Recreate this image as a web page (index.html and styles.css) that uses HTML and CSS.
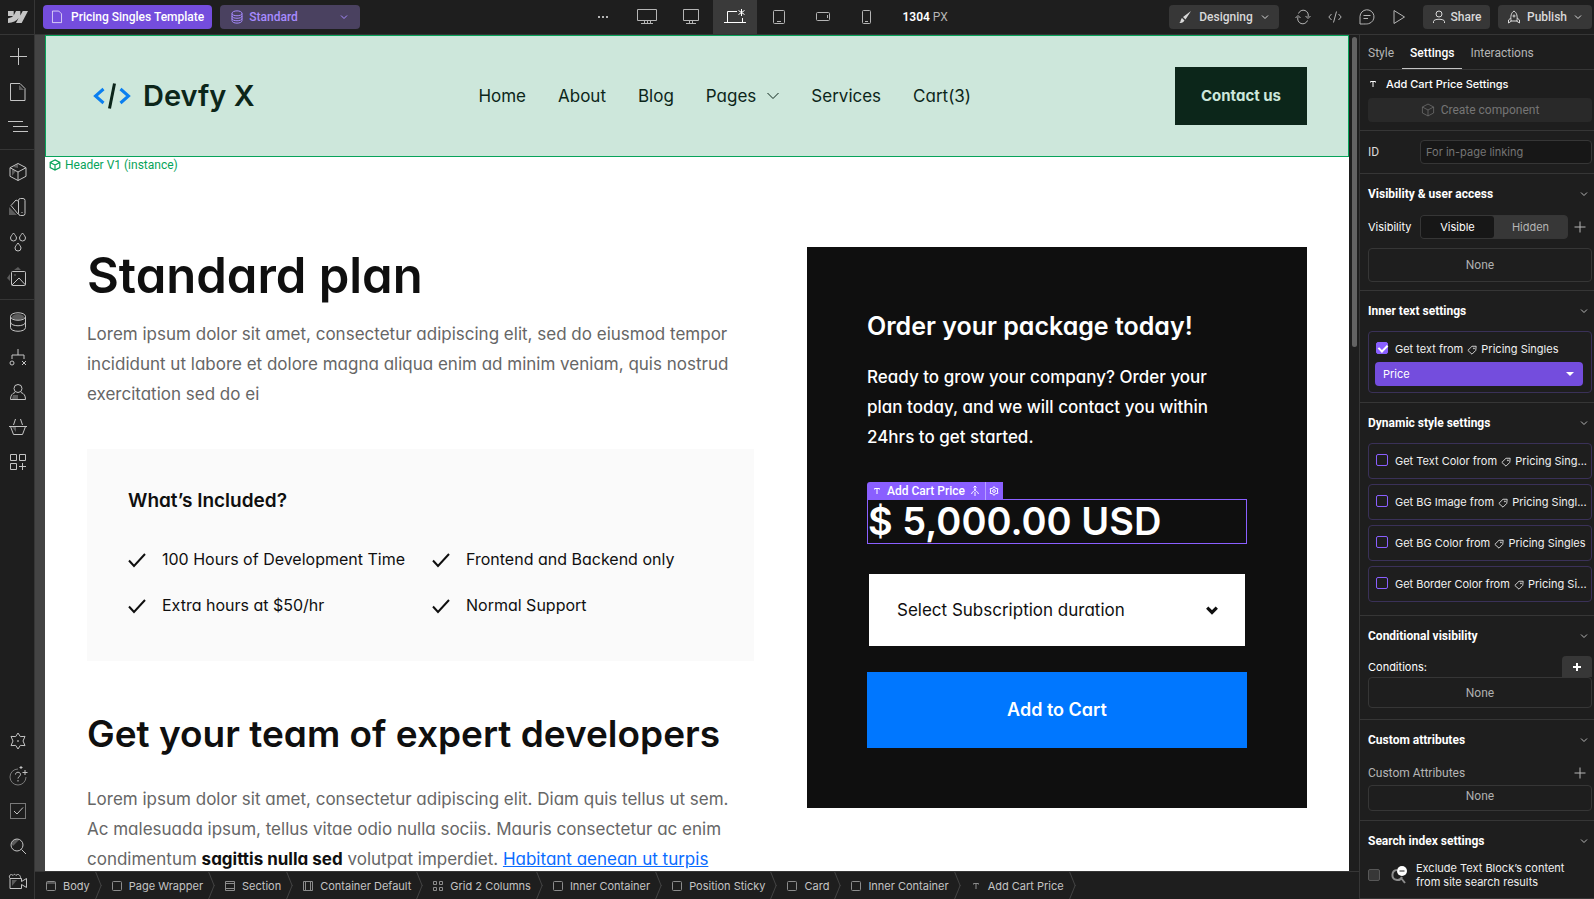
FILE: index.html
```html
<!DOCTYPE html>
<html lang="en">
<head>
    <meta charset="utf-8">
    <title>Pricing Singles Template</title>
    <link rel="stylesheet" href="styles.css">
</head>
<body>
    <!-- Shared icons -->
    <svg class="defs" aria-hidden="true">
        <symbol id="chevron" viewBox="0 0 10 10"><path d="M2 3.5l3 3 3-3"/></symbol>
        <symbol id="cube" viewBox="0 0 20 20"><path d="M10 1.5l8 4.2v8.6l-8 4.2-8-4.2V5.7zM2 5.7l8 4.3 8-4.3M10 10v8.5"/></symbol>
        <symbol id="tag" viewBox="0 0 12 12"><path d="M6 1.500h5l-.5 5L6 11 1 6.500z"/><circle cx="8.300" cy="4" r="0.600"/></symbol>
        <symbol id="plus" viewBox="0 0 12 12"><path d="M6 0.5v11M0.5 6h11"/></symbol>
        <symbol id="check" viewBox="0 0 18 18"><path d="M1 10.5l5 5.5L17 4"/></symbol>
        <symbol id="box" viewBox="0 0 10 10"><rect x="0.5" y="0.5" width="9" height="9" rx="1"/></symbol>
        <symbol id="letter" viewBox="0 0 10 10"><path d="M2.5 3.5v-1h5v1M5 2.5v5.5"/></symbol>
        <symbol id="page" viewBox="0 0 16 20"><path d="M1.5 1.5h9l4 4v12.5h-13z"/></symbol>
    </svg>

    <div class="app">
        <aside class="sidebar">
            <button class="logo" aria-label="Home">
                <svg width="20" height="12" viewBox="0 0 20 12"><path class="solid" d="M20 0l-6.300 12H8l2.600-5C8.500 9.900 5.100 11.700 0 12V7.300s3.200-.2 5-2.200H0V0h5.700v4.600L8 0h4.300v4.500L14.700 0z"/></svg>
            </button>
            <div class="tools">
                <button aria-label="Add"><svg width="17" height="17" viewBox="0 0 17 17"><path d="M8.500 0v17M0 8.500h17"/></svg></button>
                <button aria-label="Pages"><svg width="18" height="20" viewBox="0 0 18 20"><path class="shade" d="M10 3v5h5z"/><path d="M1.500 1.500h9.500l5 5v12h-14.500z"/></svg></button>
                <button aria-label="Navigator"><svg width="20" height="12" viewBox="0 0 20 12"><path d="M0 .5h15M5 5.500h15M5 10.500h15"/></svg></button>
            </div>
            <div class="tools">
                <button aria-label="Components"><svg width="20" height="20" viewBox="0 0 20 20"><path class="shade" d="M4 7l4 2-4 5zM5 5l5-3v4z"/><use href="#cube"/></svg></button>
                <button aria-label="Variables"><svg width="20" height="20" viewBox="0 0 20 20"><path class="shade" d="M1 10l8 8H1z"/><rect x="10.500" y="1.500" width="6.500" height="17" rx="2"/><path d="M10 4L8 3 3 8.500 10 17M14 15v1"/></svg></button>
                <button aria-label="Styles"><svg width="18" height="20" viewBox="0 0 18 20"><path d="M4.500 1C3 3 1.500 4.600 1.500 6a3 3 0 006 0c0-1.400-1.500-3-3-5zM13.500 1c-1.500 2-3 3.600-3 5a3 3 0 006 0c0-1.400-1.500-3-3-5zM9 11c-1.500 2-3 3.600-3 5a3 3 0 006 0c0-1.400-1.500-3-3-5z"/></svg></button>
                <button aria-label="Assets"><svg width="20" height="20" viewBox="0 0 20 20"><path class="shade" d="M6 3l4-3 3 3zM2 7v7l-3-3z"/><rect x="3.500" y="4.500" width="14" height="14" rx="1"/><path d="M4 18l7-7 6.500 7M7 7.500v1"/></svg></button>
            </div>
            <div class="tools last">
                <button aria-label="CMS"><svg width="18" height="22" viewBox="0 0 18 22"><ellipse class="shade" cx="9" cy="6" rx="6" ry="3"/><path d="M1.500 5.500c0-5 15-5 15 0v11c0 5-15 5-15 0zc0 5 15 5 15 0M1.500 11c0 5 15 5 15 0"/></svg></button>
                <button aria-label="Logic"><svg width="18" height="18" viewBox="0 0 18 18"><path d="M9 1v6M3 11V7h12v4M13 13l4 4M17 13l-4 4"/><circle cx="3" cy="15" r="2"/></svg></button>
                <button aria-label="Users"><svg width="18" height="18" viewBox="0 0 18 18"><path class="shade" d="M4 12h5v4H3z"/><circle cx="9" cy="5.500" r="4"/><path d="M6 9.500c-3 1-4.500 3-4.500 7h15c0-4-1.500-6-4.500-7"/></svg></button>
                <button aria-label="Ecommerce"><svg width="20" height="18" viewBox="0 0 20 18"><path class="shade" d="M4 9h4v5z"/><path d="M1 8.500h18M2.500 8.500l3 8h9l3-8M5.500 7l2-6M14.500 7l-2-6"/></svg></button>
                <button aria-label="Apps"><svg width="18" height="18" viewBox="0 0 18 18"><path d="M1.500 1.500h6v6h-6zM10.500 1.500h6v6h-6zM1.500 10.500h6v6h-6zM13.500 10v7M10 13.500h7"/></svg></button>
            </div>
            <div class="tools bottom">
                <button aria-label="Settings"><svg width="18" height="18" viewBox="0 0 18 18"><path stroke-linejoin="round" d="M9 1l2.300 3.600 4.700-.2L14 9l2 4.600-4.700-.2L9 17l-2.300-3.600-4.700.2L4 9 2 4.400l4.700.2z"/><circle cx="9" cy="9" r="0.500"/></svg></button>
                <button aria-label="Help"><svg width="20" height="20" viewBox="0 0 20 20"><path class="dim" d="M10 3a8 8 0 108 8"/><path d="M7.500 8.500c0-3 5-3 5 0 0 2-2.500 2-2.500 4M10 14v1.500M17 4v5M14.500 6.500h5M13 0v3M11.500 1.500h3"/></svg></button>
                <button aria-label="Audit"><svg width="18" height="18" viewBox="0 0 18 18"><rect class="dim" x="1.500" y="1.500" width="15" height="15"/><path d="M5 9l3 3 6-6.500"/></svg></button>
                <button aria-label="Search"><svg width="18" height="18" viewBox="0 0 18 18"><path class="shade" d="M4 9l6-6-4-1-4 4z"/><circle cx="8" cy="8" r="6"/><path d="M12.500 12.500L17 17"/></svg></button>
                <button aria-label="Videos"><svg width="20" height="18" viewBox="0 0 20 18"><path class="shade" d="M4 8h5l-5 6z"/><path d="M2 6.500h11.500v3l5-3v9l-5-3v4H2zM2 6.500C0 4 3 1 5 3.500c1-1.500 2-1.500 3 0 2-2.500 5 0 4.500 3"/></svg></button>
            </div>
        </aside>

        <header class="topbar">
            <button class="btn purple"><svg width="12" height="14" viewBox="0 0 16 20"><use href="#page"/></svg>Pricing Singles Template</button>
            <button class="btn collection"><svg width="12" height="14" viewBox="0 0 12 14"><path d="M1 3.500c0-3.500 10-3.500 10 0v7c0 3.500-10 3.500-10 0zc0 3 10 3 10 0M1 6c0 3 10 3 10 0M1 8.500c0 3 10 3 10 0"/></svg><span>Standard</span><svg width="10" height="10"><use href="#chevron"/></svg></button>
            <div class="devices">
                <button aria-label="More"><svg width="12" height="4" viewBox="0 0 12 4"><path class="solid" d="M1 1h2v2H1zM5 1h2v2H5zM9 1h2v2H9z"/></svg></button>
                <button aria-label="1920"><svg width="20" height="16" viewBox="0 0 20 16"><path d="M.5.500h19v11H.5zM4 14.500h12M7.500 12v2M10.500 12v2M13.500 12v2"/></svg></button>
                <button aria-label="1440"><svg width="16" height="16" viewBox="0 0 16 16"><path d="M.5.500h15v11H.5zM3 14.500h10M6.500 12v2M9.500 12v2"/></svg></button>
                <button class="active" aria-label="Desktop"><svg width="22" height="16" viewBox="0 0 22 16"><path d="M13 2.500H3.500v11M18.500 9v4.500M0 13.500h22M17.500 0v7M14.500 1.500l6 4M14.500 5.500l6-4"/></svg></button>
                <button aria-label="Tablet"><svg width="12" height="14" viewBox="0 0 12 14"><rect x="0.500" y="0.500" width="11" height="13" rx="1"/><path d="M4 11.500h4"/></svg></button>
                <button aria-label="Mobile landscape"><svg width="14" height="10" viewBox="0 0 14 10"><rect x="0.500" y="0.500" width="13" height="8" rx="1"/><path d="M11.500 3v3"/></svg></button>
                <button aria-label="Mobile portrait"><svg width="10" height="14" viewBox="0 0 10 14"><rect x="0.500" y="0.500" width="8" height="13" rx="1"/><path d="M3 11.500h3"/></svg></button>
                <div class="width"><b>1304</b> PX</div>
            </div>
            <button class="btn mode"><svg width="14" height="14" viewBox="0 0 14 14"><path class="solid" d="M1 13c2 0 1-3 3-5l2.500 2.500C5 13 3 13 1 13zM5 7l8-6-5.500 8.500z"/></svg>Designing<svg width="10" height="10"><use href="#chevron"/></svg></button>
            <div class="actions">
                <button aria-label="Sync"><svg width="16" height="14" viewBox="0 0 16 14"><path d="M3.500 3.500A5 5 0 0113 7M.5 8L3 5.500 5.500 8M12.500 10.500A5 5 0 013 7M10.500 6L13 8.500 15.500 6"/></svg></button>
                <button aria-label="Code"><svg width="14" height="12" viewBox="0 0 14 12"><path d="M3.500 3L.8 6l2.700 3M10.500 3l2.700 3-2.700 3M8.500.5l-3 11"/></svg></button>
                <button aria-label="Comments"><svg width="16" height="16" viewBox="0 0 16 16"><path d="M1 15V7.500A7 7 0 1110 14.500c-1 .5-3 .5-9 .5zM4.500 6.500h7M4.500 9.500H9"/></svg></button>
                <button aria-label="Preview"><svg width="12" height="16" viewBox="0 0 12 16"><path d="M1 1.500v13L11.500 8z"/></svg></button>
            </div>
            <button class="btn share"><svg width="14" height="14" viewBox="0 0 14 14"><circle cx="7" cy="4" r="3"/><path d="M1.500 13V11.500c0-3 11-3 11 0V13"/></svg>Share</button>
            <button class="btn publish"><svg width="14" height="14" viewBox="0 0 14 14"><path d="M7 1c-3 2-3.500 5-3 10h6C10.500 6 10 3 7 1zM3.800 8L1.500 10v3l3-2M10.200 8l2.300 2v3l-3-2"/><circle cx="7" cy="6" r="1"/></svg>Publish<svg width="10" height="10"><use href="#chevron"/></svg></button>
        </header>

        <main class="stage">
            <div class="canvas">
                <div class="site-header">
                    <a class="brand" href="#">
                        <svg width="38" height="26" viewBox="0 0 38 26"><path class="blue" d="M10.500 6L2.500 13l8 7M27.500 6l8 7-8 7"/><path class="slash" d="M21.500 0.500l-5 25"/></svg>
                        Devfy X
                    </a>
                    <nav>
                        <a href="#">Home</a>
                        <a href="#">About</a>
                        <a href="#">Blog</a>
                        <a href="#">Pages<svg width="12" height="8" viewBox="0 0 12 8"><path d="M.5 1L6 6.500 11.500 1"/></svg></a>
                        <a href="#">Services</a>
                        <a href="#">Cart(3)</a>
                    </nav>
                    <a class="contact" href="#">Contact us</a>
                    <div class="instance"><svg width="12" height="12" viewBox="0 0 20 20"><use href="#cube"/></svg>Header V1 (instance)</div>
                </div>

                <div class="content">
                    <article>
                        <h1>Standard plan</h1>
                        <p>Lorem ipsum dolor sit amet, consectetur adipiscing elit, sed do eiusmod tempor incididunt ut labore et dolore magna aliqua enim ad minim veniam, quis nostrud exercitation sed do ei</p>
                        <section class="included">
                            <h3>What’s Included?</h3>
                            <ul>
                                <li><svg width="18" height="18"><use href="#check"/></svg>100 Hours of Development Time</li>
                                <li><svg width="18" height="18"><use href="#check"/></svg>Frontend and Backend only</li>
                                <li><svg width="18" height="18"><use href="#check"/></svg>Extra hours at $50/hr</li>
                                <li><svg width="18" height="18"><use href="#check"/></svg>Normal Support</li>
                            </ul>
                        </section>
                        <h2>Get your team of expert developers</h2>
                        <p>Lorem ipsum dolor sit amet, consectetur adipiscing elit. Diam quis tellus ut sem. Ac malesuada ipsum, tellus vitae odio nulla sociis. Mauris consectetur ac enim condimentum <strong>sagittis nulla sed</strong> volutpat imperdiet. <a href="#">Habitant aenean ut turpis</a></p>
                    </article>

                    <section class="order">
                        <h2>Order your package today!</h2>
                        <p>Ready to grow your company? Order your plan today, and we will contact you within 24hrs to get started.</p>
                        <div class="price">
                            $ 5,000.00 USD
                            <div class="badge">
                                <svg width="10" height="10"><use href="#letter"/></svg>
                                <span>Add Cart Price</span>
                                <svg width="10" height="10" viewBox="0 0 10 10"><path d="M5 0v3M3.500 1.500L5 0l1.500 1.500M5 3C5 6 2 5 1.500 8M5 3c0 3 3 2 3.500 5M5 6v4"/></svg>
                                <button aria-label="Element settings"><svg width="10" height="10" viewBox="0 0 18 18"><path stroke-width="1.800" d="M9 1l2.500 3 4.500 1-1 4 1 4-4.500 1L9 17l-2.500-3L2 13l1-4-1-4 4.500-1z"/><circle stroke-width="1.800" cx="9" cy="9" r="2.500"/></svg></button>
                            </div>
                        </div>
                        <div class="duration">
                            <select aria-label="Subscription duration"><option>Select Subscription duration</option></select>
                            <svg width="16" height="16"><use href="#chevron"/></svg>
                        </div>
                        <button class="add-to-cart">Add to Cart</button>
                    </section>
                </div>
            </div>
            <div class="scrollbar"><div class="thumb"></div></div>
        </main>

        <aside class="panel">
            <div class="tabs">
                <button>Style</button>
                <button class="active">Settings</button>
                <button>Interactions</button>
            </div>
            <div class="element">
                <div class="element-name"><svg width="10" height="10"><use href="#letter"/></svg>Add Cart Price Settings</div>
                <button class="create" disabled><svg width="14" height="14" viewBox="0 0 20 20"><use href="#cube"/></svg>Create component</button>
            </div>
            <div class="row id-row">
                <label for="element-id">ID</label>
                <input type="text" id="element-id" placeholder="For in-page linking">
            </div>

            <section class="access">
                <h4>Visibility &amp; user access<svg width="10" height="10"><use href="#chevron"/></svg></h4>
                <div class="row">
                    <span class="name">Visibility</span>
                    <div class="toggle"><button class="active">Visible</button><button>Hidden</button></div>
                    <button class="plus" aria-label="Add condition"><svg width="12" height="12"><use href="#plus"/></svg></button>
                </div>
                <div class="none">None</div>
            </section>

            <section>
                <h4>Inner text settings<svg width="10" height="10"><use href="#chevron"/></svg></h4>
                <div class="binding bound">
                    <label><input type="checkbox" checked><span>Get text from <svg width="10" height="10"><use href="#tag"/></svg> Pricing Singles</span></label>
                    <div class="field">
                        <select aria-label="Field"><option>Price</option></select>
                        <svg width="8" height="4" viewBox="0 0 8 4"><path d="M0 0h8L4 4z"/></svg>
                    </div>
                </div>
            </section>

            <section class="dynamic">
                <h4>Dynamic style settings<svg width="10" height="10"><use href="#chevron"/></svg></h4>
                <div class="binding"><label><input type="checkbox"><span>Get Text Color from <svg width="10" height="10"><use href="#tag"/></svg> Pricing Sing...</span></label></div>
                <div class="binding"><label><input type="checkbox"><span>Get BG Image from <svg width="10" height="10"><use href="#tag"/></svg> Pricing Singl...</span></label></div>
                <div class="binding"><label><input type="checkbox"><span>Get BG Color from <svg width="10" height="10"><use href="#tag"/></svg> Pricing Singles</span></label></div>
                <div class="binding"><label><input type="checkbox"><span>Get Border Color from <svg width="10" height="10"><use href="#tag"/></svg> Pricing Si...</span></label></div>
            </section>

            <section class="conditional">
                <h4>Conditional visibility<svg width="10" height="10"><use href="#chevron"/></svg></h4>
                <div class="row between">
                    <span class="name">Conditions:</span>
                    <button class="add-condition" aria-label="Add condition"><svg width="8" height="8" viewBox="0 0 8 8"><path d="M4 0v8M0 4h8"/></svg></button>
                </div>
                <div class="none">None</div>
            </section>

            <section>
                <h4>Custom attributes<svg width="10" height="10"><use href="#chevron"/></svg></h4>
                <div class="row between attributes">
                    <span>Custom Attributes</span>
                    <button class="plus" aria-label="Add attribute"><svg width="12" height="12"><use href="#plus"/></svg></button>
                </div>
                <div class="none short">None</div>
            </section>

            <section>
                <h4>Search index settings<svg width="10" height="10"><use href="#chevron"/></svg></h4>
                <label class="exclude">
                    <input type="checkbox">
                    <svg width="18" height="18" viewBox="0 0 18 18"><path d="M7 4a5 5 0 105 7M11 12l4 5"/><circle cx="12" cy="5" r="5"/><path class="minus" d="M9.500 5h5"/></svg>
                    <span>Exclude Text Block’s content<br>from site search results</span>
                </label>
            </section>
        </aside>

        <footer class="breadcrumbs">
            <button><svg width="10" height="10" viewBox="0 0 10 10"><rect x="0.500" y="0.500" width="9" height="9" rx="1"/><path d="M.5 2h9"/></svg>Body</button>
            <button><svg width="10" height="10"><use href="#box"/></svg>Page Wrapper</button>
            <button><svg width="10" height="10" viewBox="0 0 10 10"><path d="M.5.500h9v9H.5zM.5 2.500h9M.5 7.500h9"/></svg>Section</button>
            <button><svg width="10" height="10" viewBox="0 0 10 10"><path d="M.5.500h9v9H.5zM2.500.5v9M7.500.5v9"/></svg>Container Default</button>
            <button><svg width="10" height="10" viewBox="0 0 10 10"><path d="M.5.500h3v3h-3zM6.500.500h3v3h-3zM.5 6.500h3v3h-3zM6.500 6.500h3v3h-3z"/></svg>Grid 2 Columns</button>
            <button><svg width="10" height="10"><use href="#box"/></svg>Inner Container</button>
            <button><svg width="10" height="10"><use href="#box"/></svg>Position Sticky</button>
            <button><svg width="10" height="10"><use href="#box"/></svg>Card</button>
            <button><svg width="10" height="10"><use href="#box"/></svg>Inner Container</button>
            <button><svg width="10" height="10"><use href="#letter"/></svg>Add Cart Price</button>
        </footer>
    </div>
</body>
</html>
```
FILE: styles.css
```css
* { box-sizing: border-box; }
body { margin: 0; background: #1e1e1e; color: #d9d9d9; font: 12px/16px Roboto, "Liberation Sans", sans-serif; }
button, input, select { font: inherit; color: inherit; background: none; border: none; margin: 0; padding: 0; }
button { display: flex; align-items: center; justify-content: center; cursor: pointer; }
h1, h2, h3, h4, p, ul { margin: 0; padding: 0; }
a { color: inherit; text-decoration: none; }
svg { fill: none; stroke: currentColor; flex: none; overflow: visible; }
.solid { fill: currentColor; stroke: none; }
.shade { fill: #5c5c5c; stroke: none; }
.dim { stroke: #7a7a7a; }
.defs { position: absolute; width: 0; height: 0; }

.app { display: grid; grid-template-columns: 35px minmax(0, 1fr) 235px; grid-template-rows: 35px minmax(0, 1fr) 28px; height: 100vh; }

/* Left sidebar */
.sidebar { grid-row: 1 / 4; display: flex; flex-direction: column; border-right: 1px solid #363636; color: #c4c4c4; }
.logo { height: 35px; padding-left: 2px; border-bottom: 1px solid #363636; }
.tools { padding: 4px 0 5px 2px; border-bottom: 1px solid #363636; }
.tools button { width: 100%; height: 35px; }
.tools.last { border: none; }
.tools.bottom { margin-top: auto; padding-top: 0; padding-bottom: 1px; border: none; }

/* Top bar */
.topbar { grid-column: 2 / 4; display: flex; align-items: center; padding: 0 2px 1px 8px; border-bottom: 1px solid #363636; }
.btn { height: 24px; gap: 5px; padding: 0 8px; border-radius: 4px; background: #373737; font-weight: 500; white-space: nowrap; }
.purple { min-width: 169px; background: #744ddd; color: #fff; gap: 8px; }
.collection { width: 140px; margin-left: 8px; padding: 0 11px; gap: 6px; background: #4a4160; color: #a78bff; }
.collection span { flex: 1; text-align: left; }
.devices { display: flex; align-items: center; margin: 0 auto; color: #b5b5b5; }
.devices button { width: 44px; height: 34px; }
.devices .active { background: #3a3a3a; color: #fff; }
.width { padding-left: 13px; }
.width b { color: #fff; font-weight: 600; }
.mode { width: 110px; gap: 7px; }
.actions { display: flex; margin: 0 8px; color: #b5b5b5; }
.actions button { width: 32px; height: 24px; }
.share { min-width: 67px; margin-right: 8px; }
.publish { min-width: 94px; gap: 6px; padding: 0 7px; }

/* Canvas */
.stage { display: flex; min-height: 0; padding-left: 10px; background: #444; }
.canvas { flex: 1; overflow: hidden; background: #fff; color: #0f0f0f; font-family: Inter, "Liberation Sans", sans-serif; font-size: 17px; line-height: 30px; font-feature-settings: "cv11"; }
.scrollbar { width: 10px; padding: 2px 3px 0 3px; background: #1e1e1e; }
.thumb { width: 5px; height: 310px; border-radius: 3px; background: #636363; }

.site-header { position: relative; display: flex; align-items: center; justify-content: space-between; height: 122px; padding: 0 41px; border: 1px solid #07a35a; background: #cde7db; color: #0c261a; }
.brand { display: flex; align-items: center; gap: 12px; padding: 0 20px 0 6px; font-size: 29px; font-weight: 600; }
.blue { stroke: #0a7ff0; stroke-width: 3; }
.slash { stroke-width: 3; }
nav { display: flex; gap: 32px; }
nav svg { margin-left: 11px; vertical-align: 2px; }
.contact { padding: 14px 26px; background: #0c261a; color: #cde7db; font-size: 15px; font-weight: 700; }
.instance { position: absolute; top: 121px; left: 3px; display: flex; align-items: center; gap: 4px; color: #07a35a; font-family: Roboto, sans-serif; font-size: 12px; line-height: 16px; }
.instance svg { stroke-width: 2; }

.content { display: grid; grid-template-columns: minmax(0, 1fr) 500px; gap: 53px; align-items: start; padding: 90px 42px 0; }
article h1 { margin-bottom: 14px; font-size: 49px; line-height: 58px; font-weight: 600; }
article p { color: #666; }
article strong { color: #0f0f0f; }
article p a { color: #0a6cff; text-decoration: underline; }
.included { margin: 40px 0 48px; padding: 37px 41px 41px; background: #fafafa; }
.included h3 { font-size: 19px; font-weight: 600; }
.included ul { display: grid; grid-template-columns: 272px 1fr; gap: 16px 32px; margin-top: 28px; list-style: none; font-size: 16px; }
.included li { display: flex; align-items: center; gap: 16px; white-space: nowrap; }
.included svg { stroke-width: 2; }
article h2 { margin-bottom: 25px; font-size: 37px; line-height: 50px; font-weight: 600; }

.order { padding: 60px; background: #0f0f0f; color: #fff; }
.order h2 { margin-bottom: 17px; font-size: 25px; line-height: 38px; font-weight: 600; }
.order p { padding-right: 24px; font-weight: 500; }
.price { position: relative; margin: 47px 0 28px; border: 1px solid #8a5fff; font-size: 38px; line-height: 43px; font-weight: 600; }
.badge { position: absolute; bottom: 100%; left: -1px; display: flex; align-items: center; gap: 5px; height: 18px; padding-left: 5px; border-radius: 3px 0 0 0; background: #8a5fff; font-family: Roboto, sans-serif; font-size: 12px; line-height: 16px; font-weight: 500; }
.badge button { width: 18px; height: 18px; border-left: 1px solid #b79fff; }
.duration { position: relative; padding: 2px; }
.duration select { width: 100%; height: 72px; padding: 0 28px; appearance: none; background: #fff; color: #0f0f0f; }
.duration svg { position: absolute; right: 27px; top: 30px; stroke: #0f0f0f; stroke-width: 2; }
.add-to-cart { width: 100%; height: 76px; margin-top: 24px; background: #07f; font-size: 18px; font-weight: 600; }

/* Settings panel */
.panel { grid-row: 2 / 4; grid-column: 3; min-height: 0; overflow: hidden; border-left: 1px solid #363636; }
.tabs { display: flex; height: 35px; border-bottom: 1px solid #363636; color: #b5b5b5; }
.tabs button { padding: 1px 8px 0; }
.tabs .active { padding-top: 2px; border-bottom: 1px solid #c4c4c4; color: #fff; font-weight: 500; }
.element { padding: 6px 2px 8px 8px; border-bottom: 1px solid #363636; }
.element-name, .id-row input, .name, .toggle, .binding, .exclude, .breadcrumbs { font-family: Inter, "Liberation Sans", sans-serif; font-size: 11px; }
.element-name { display: flex; align-items: center; gap: 8px; color: #fff; font-weight: 500; }
.create { width: 100%; height: 24px; margin-top: 6px; gap: 6px; border-radius: 4px; background: #292929; color: #757575; }
.row { display: flex; align-items: center; }
.id-row { height: 43px; padding: 0 2px 0 8px; border-bottom: 1px solid #363636; }
.id-row label { width: 52px; }
.id-row input { flex: 1; min-width: 0; height: 24px; padding: 0 5px; border: 1px solid #363636; border-radius: 4px; background: #171717; }
.id-row input::placeholder { color: #757575; }
.panel section { padding: 0 2px 9px 8px; border-bottom: 1px solid #363636; }
h4 { display: flex; align-items: center; justify-content: space-between; height: 40px; padding-right: 3px; color: #fff; font-size: 12px; font-weight: 700; }
h4 svg { color: #b5b5b5; }
.name { width: 52px; color: #fff; }
.toggle { display: flex; flex: 1; height: 24px; border: 1px solid #363636; border-radius: 4px; background: #373737; color: #b5b5b5; }
.toggle button { flex: 1; border-radius: 3px; }
.toggle .active { background: #171717; color: #fff; }
.plus { width: 24px; height: 24px; color: #b5b5b5; }
.none { display: flex; align-items: center; justify-content: center; height: 31px; border: 1px solid #363636; border-radius: 4px; color: #b0b0b0; }
.access .row { margin: 1px 0 9px; }
.access .none { height: 34px; }
.panel .access { padding-bottom: 8px; }
.short { height: 26px; padding-bottom: 4px; }
.binding { height: 36px; padding: 0 4px 0 7px; border: 1px solid #3a3158; border-radius: 4px; }
.binding + .binding { margin-top: 5px; }
.binding label { display: flex; align-items: center; gap: 7px; height: 34px; color: #f0f0f0; }
.binding span { white-space: nowrap; }
.binding span svg { margin: 0 1px; vertical-align: -2px; }
.binding input { flex: none; width: 12px; height: 12px; margin-bottom: 2px; appearance: none; border: 1px solid #8a5fff; border-radius: 2px; }
.binding input:checked { background: #8a5fff; }
.binding input:checked::before { content: ""; display: block; width: 4px; height: 7px; margin: 0 3px; border: solid #fff; border-width: 0 2px 2px 0; transform: rotate(45deg); }
.bound { height: 62px; padding: 3px 8px 0 6px; }
.bound label { height: 27px; padding-left: 1px; }
.field { position: relative; }
.field select { width: 100%; height: 24px; padding: 0 8px; appearance: none; border-radius: 4px; background: #744ddd; color: #fff; }
.field svg { position: absolute; right: 9px; top: 10px; fill: #fff; stroke: none; }
.panel .dynamic { padding-bottom: 13px; }
.panel .conditional { padding-bottom: 11px; }
.between { justify-content: space-between; }
.add-condition { width: 30px; height: 21px; border-radius: 4px 4px 0 0; background: #373737; color: #fff; }
.add-condition svg { stroke-width: 2; }
.attributes { height: 25px; color: #b5b5b5; }
.exclude { display: flex; align-items: center; height: 28px; color: #f0f0f0; line-height: 14px; }
.exclude input { width: 12px; height: 12px; margin-right: 10px; appearance: none; border: 1px solid #575757; border-radius: 2px; background: #373737; }
.exclude svg { margin-right: 8px; color: #8c8c8c; stroke-width: 2; }
.exclude circle { fill: #fff; stroke: none; }
.minus { stroke: #1e1e1e; stroke-width: 1; }

/* Breadcrumbs */
.breadcrumbs { grid-column: 2; display: flex; border-top: 1px solid #363636; color: #c4c4c4; overflow: hidden; }
.breadcrumbs button { position: relative; gap: 7px; padding: 0 11px; white-space: nowrap; }
.breadcrumbs button svg { color: #8c8c8c; }
.breadcrumbs button::before, .breadcrumbs button::after { content: ""; position: absolute; right: 2px; width: 1px; height: 14px; background: #444; }
.breadcrumbs button::before { top: 0; transform: skewX(22deg); }
.breadcrumbs button::after { bottom: 0; transform: skewX(-22deg); }
```
